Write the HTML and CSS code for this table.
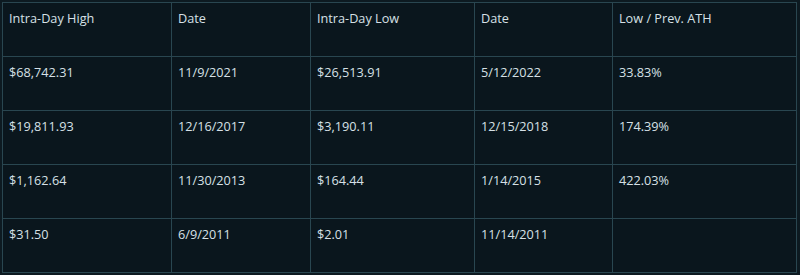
FILE: index.html
```html
<!DOCTYPE html>
<html>
<head>
<meta charset="utf-8">
<link rel="stylesheet" href="styles.css">
</head>
<body>
<table class="ath">
  <colgroup>
    <col class="c1"><col class="c2"><col class="c3"><col class="c4"><col class="c5">
  </colgroup>
  <tr>
    <td>Intra-Day High</td><td>Date</td><td>Intra-Day Low</td><td>Date</td><td>Low / Prev. ATH</td>
  </tr>
  <tr>
    <td>$68,742.31</td><td>11/9/2021</td><td>$26,513.91</td><td>5/12/2022</td><td>33.83%</td>
  </tr>
  <tr>
    <td>$19,811.93</td><td>12/16/2017</td><td>$3,190.11</td><td>12/15/2018</td><td>174.39%</td>
  </tr>
  <tr>
    <td>$1,162.64</td><td>11/30/2013</td><td>$164.44</td><td>1/14/2015</td><td>422.03%</td>
  </tr>
  <tr>
    <td>$31.50</td><td>6/9/2011</td><td>$2.01</td><td>11/14/2011</td><td></td>
  </tr>
</table>
</body>
</html>
```

FILE: styles.css
```css
html, body {
  margin: 0;
  padding: 0;
  background: #0d1a21;
}
body {
  padding: 2px;
}
.ath {
  border-collapse: collapse;
  table-layout: fixed;
  width: 794px;
  background: #0a161d;
  font-family: "Open Sans", "Noto Sans", sans-serif;
  font-size: 12.7px;
  color: #d6e0e6;
}
.c1 { width: 169px; }
.c2 { width: 139px; }
.c3 { width: 164px; }
.c4 { width: 138px; }
.c5 { width: 184px; }
.ath td {
  border: 1px solid #294650;
  height: 54px;
  padding: 6px 6px 0;
  vertical-align: top;
  box-sizing: border-box;
  line-height: 18px;
}
```
